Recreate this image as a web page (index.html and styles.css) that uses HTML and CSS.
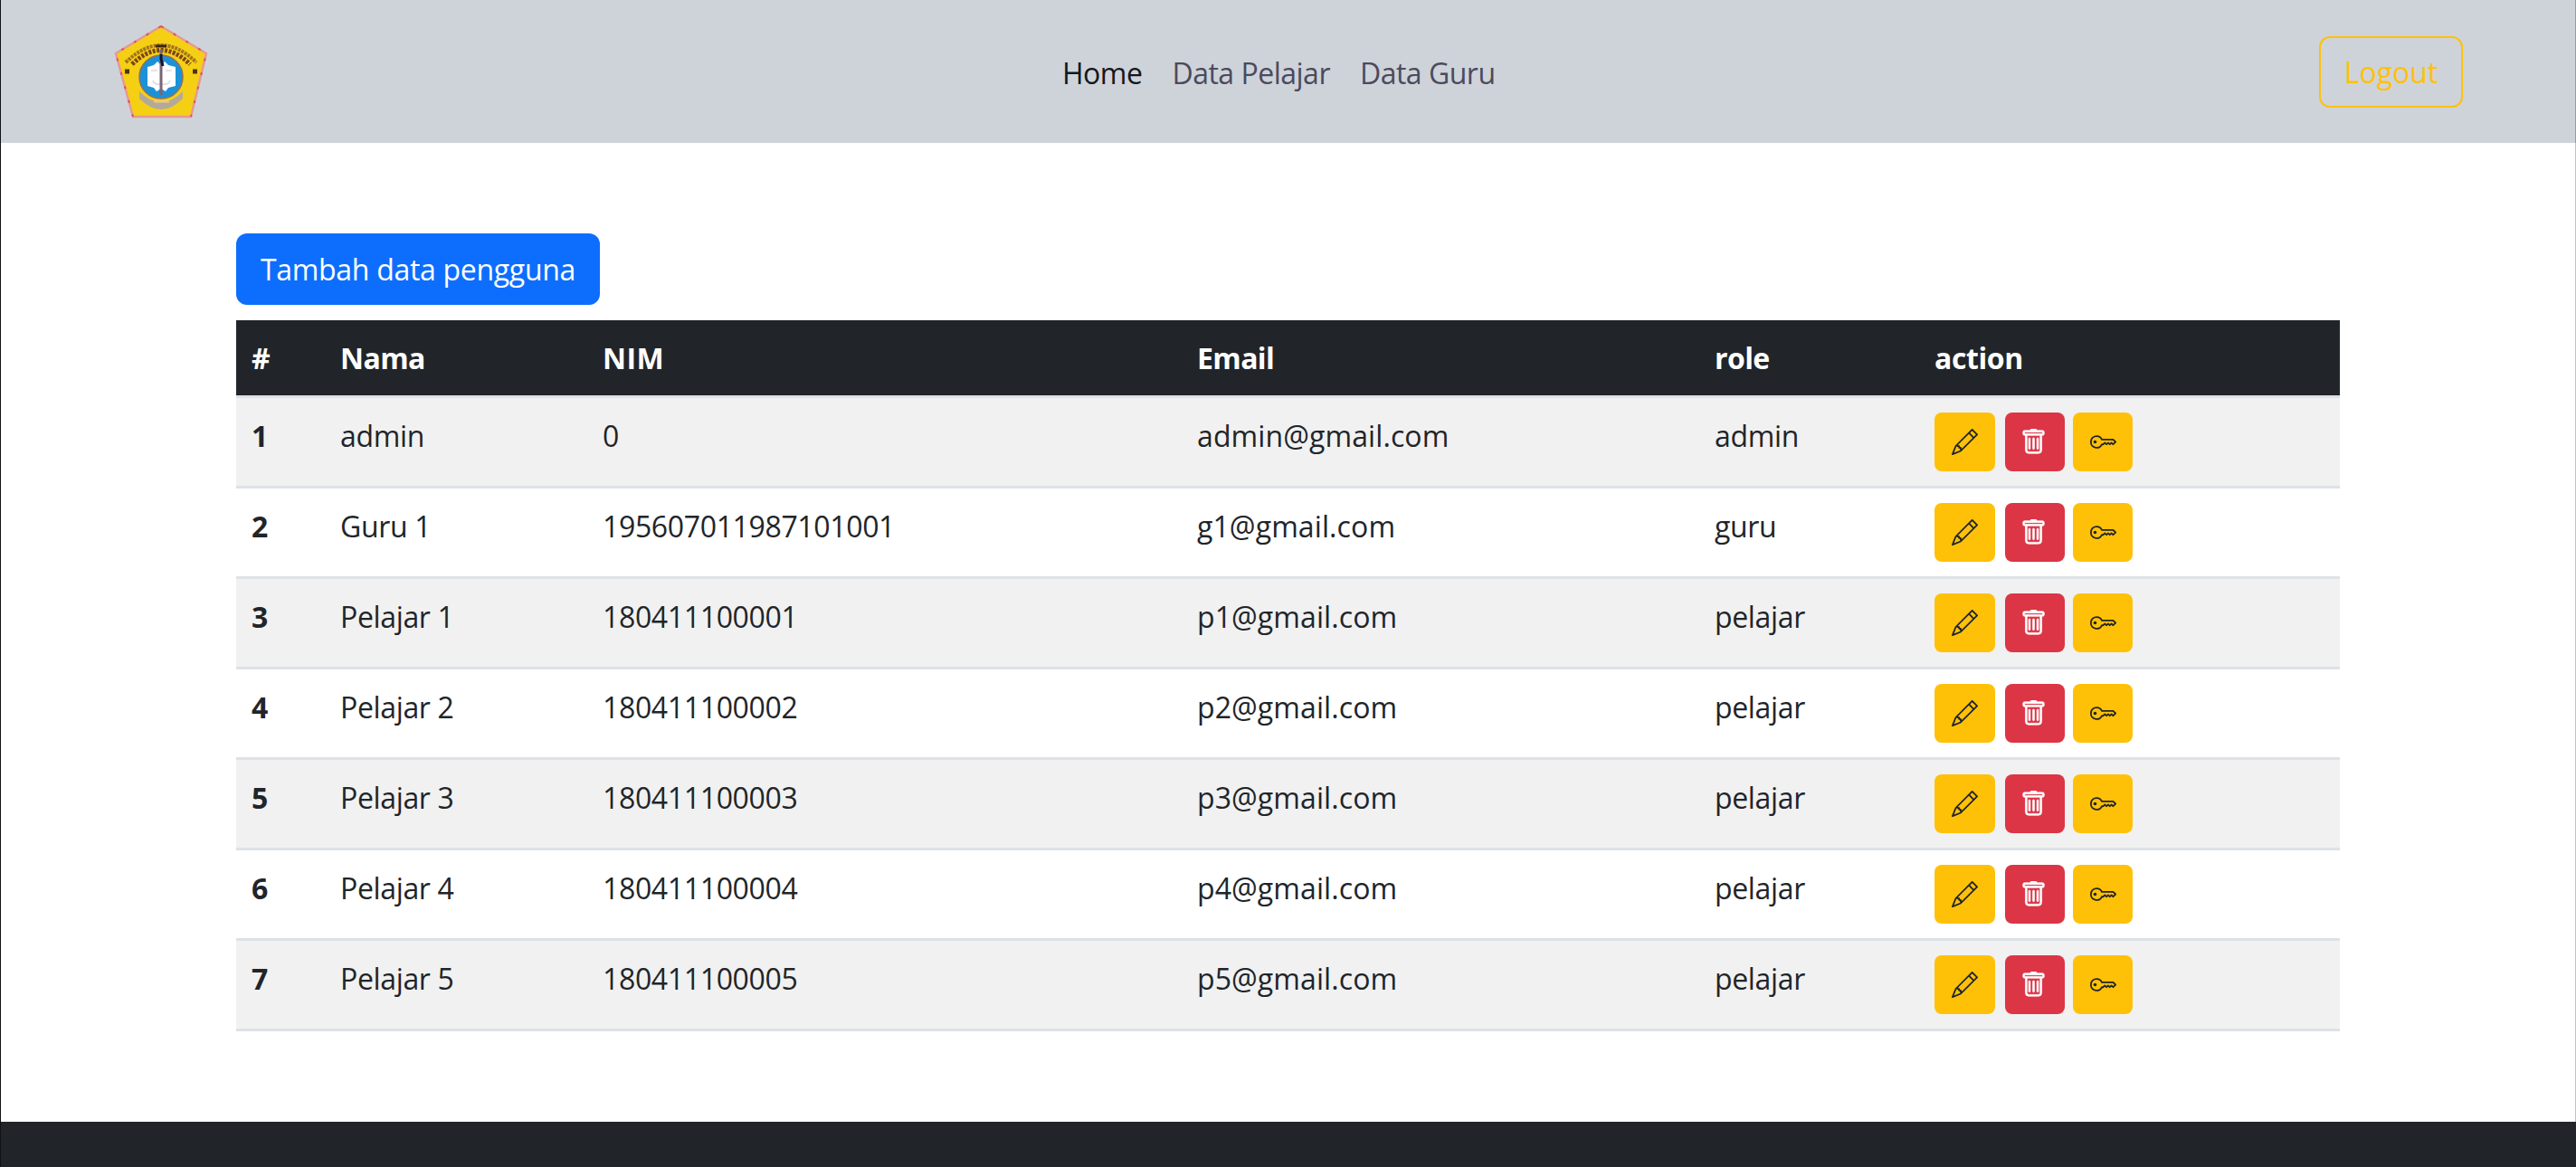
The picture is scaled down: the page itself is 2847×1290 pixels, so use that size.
FILE: index.html
```html
<!DOCTYPE html>
<html lang="id">
<head>
<meta charset="utf-8">
<title>Data Pengguna</title>
<link rel="stylesheet" href="styles.css">
</head>
<body>
<svg class="sprite" aria-hidden="true">
  <symbol id="pencil" viewBox="0 0 16 16"><path d="M12.146.146a.5.5 0 0 1 .708 0l3 3a.5.5 0 0 1 0 .708l-10 10a.5.5 0 0 1-.168.11l-5 2a.5.5 0 0 1-.65-.65l2-5a.5.5 0 0 1 .11-.168l10-10zM11.207 2.5 13.5 4.793 14.793 3.5 12.5 1.207 11.207 2.5zm1.586 3L10.500 3.207 4 9.707V10h.5a.5.5 0 0 1 .5.5v.5h.5a.5.5 0 0 1 .5.5v.5h.293l6.500-6.500zm-9.761 5.175-.106.106-1.528 3.821 3.821-1.528.106-.106A.5.5 0 0 1 5 12.500V12h-.5a.5.5 0 0 1-.5-.5V11h-.5a.5.5 0 0 1-.468-.325z"/></symbol>
  <symbol id="trash" viewBox="0 0 16 16"><path d="M5.500 5.500A.5.5 0 0 1 6 6v6a.5.5 0 0 1-1 0V6a.5.5 0 0 1 .5-.5zm2.500 0a.5.5 0 0 1 .5.5v6a.5.5 0 0 1-1 0V6a.5.5 0 0 1 .5-.5zm3 .5a.5.5 0 0 0-1 0v6a.5.5 0 0 0 1 0V6z"/><path fill-rule="evenodd" d="M14.500 3a1 1 0 0 1-1 1H13v9a2 2 0 0 1-2 2H5a2 2 0 0 1-2-2V4h-.5a1 1 0 0 1-1-1V2a1 1 0 0 1 1-1H6a1 1 0 0 1 1-1h2a1 1 0 0 1 1 1h3.500a1 1 0 0 1 1 1v1zM4.118 4 4 4.059V13a1 1 0 0 0 1 1h6a1 1 0 0 0 1-1V4.059L11.882 4H4.118zM2.500 3V2h11v1h-11z"/></symbol>
  <symbol id="key" viewBox="0 0 16 16"><path d="M0 8a4 4 0 0 1 7.465-2H14a.5.5 0 0 1 .354.146l1.500 1.500a.5.5 0 0 1 0 .708l-1.500 1.500a.5.5 0 0 1-.708 0L13 9.207l-.646.647a.5.5 0 0 1-.708 0L11 9.207l-.646.647a.5.5 0 0 1-.708 0L9 9.207l-.646.647A.5.5 0 0 1 8 10h-.535A4 4 0 0 1 0 8zm4-3a3 3 0 1 0 2.712 4.285A.5.5 0 0 1 7.163 9h.63l.853-.854a.5.5 0 0 1 .708 0l.646.647.646-.647a.5.5 0 0 1 .708 0l.646.647.646-.647a.5.5 0 0 1 .708 0l.646.647.793-.793-1-1h-6.630a.5.5 0 0 1-.451-.285A3 3 0 0 0 4 5z"/><path d="M4 8a1 1 0 1 1-2 0 1 1 0 0 1 2 0z"/></symbol>
</svg>
<header class="navbar">
  <svg class="logo" viewBox="0 0 104 104">
    <path d="M52 2 102 32 85 102H21L2 32Z" fill="#f5cf14" stroke="#e59a92" stroke-width="2.500"/>
    <path d="M52 2 102 32 85 102" fill="none" stroke="#d9324b" stroke-width="2" stroke-dasharray="3 13" opacity=".7"/>
    <path d="M52 2 2 32 21 102" fill="none" stroke="#d9324b" stroke-width="2" stroke-dasharray="3 13" opacity=".7"/>
    <path d="M13 42Q52 4 91 42" fill="none" stroke="#a3741c" stroke-width="4" stroke-dasharray="3 1"/>
    <path d="M20 44Q52 13 84 44" fill="none" stroke="#7a4616" stroke-width="5" stroke-dasharray="3 1.500"/>
    <path d="M46 24h12" stroke="#3b2410" stroke-width="3"/>
    <path d="M28 74Q52 98 76 74L76 82Q52 106 28 82Z" fill="#b3a99a"/>
    <circle cx="52" cy="58" r="24" fill="#1c91d8" stroke="#8c715c" stroke-width="1.500"/>
    <path d="M37 47 44 45 48 41 52 45 56 41 60 45 68 47V68L60 70 57 74 52 71 47 74 44 70 37 68Z" fill="#fff"/>
    <path d="M41 51h7M57 51h7M43 62q1 5 8 4M53 66q8 1 9-4" stroke="#dadbe2" stroke-width="1.500" fill="none"/>
    <path d="M52 28v50" stroke="#796575" stroke-width="3"/>
    <path d="M52 33V38L54 46" stroke="#15172d" stroke-width="3" fill="none"/>
    <path d="M44 85h17" stroke="#f0c878" stroke-width="3"/>
    <path d="M12 52h5M87 52h5" stroke="#51320e" stroke-width="5"/>
  </svg>
  <nav class="menu">
    <a class="link home">Home</a>
    <a class="link">Data Pelajar</a>
    <a class="link">Data Guru</a>
  </nav>
  <a class="btn logout">Logout</a>
</header>
<main class="content">
  <a class="btn add">Tambah data pengguna</a>
  <table class="users">
    <colgroup><col class="c1"><col class="c2"><col class="c3"><col class="c4"><col class="c5"><col class="c6"></colgroup>
    <thead><tr><th>#</th><th>Nama</th><th class="nim">NIM</th><th>Email</th><th>role</th><th>action</th></tr></thead>
    <tbody>
      <tr><th>1</th><td>admin</td><td>0</td><td class="email">admin@gmail.com</td><td>admin</td><td><div class="actions"><a class="act edit"><svg><use href="#pencil"/></svg></a><a class="act del"><svg><use href="#trash"/></svg></a><a class="act"><svg><use href="#key"/></svg></a></div></td></tr>
      <tr><th>2</th><td>Guru 1</td><td>195607011987101001</td><td class="email">g1@gmail.com</td><td>guru</td><td><div class="actions"><a class="act edit"><svg><use href="#pencil"/></svg></a><a class="act del"><svg><use href="#trash"/></svg></a><a class="act"><svg><use href="#key"/></svg></a></div></td></tr>
      <tr><th>3</th><td>Pelajar 1</td><td>180411100001</td><td class="email">p1@gmail.com</td><td>pelajar</td><td><div class="actions"><a class="act edit"><svg><use href="#pencil"/></svg></a><a class="act del"><svg><use href="#trash"/></svg></a><a class="act"><svg><use href="#key"/></svg></a></div></td></tr>
      <tr><th>4</th><td>Pelajar 2</td><td>180411100002</td><td class="email">p2@gmail.com</td><td>pelajar</td><td><div class="actions"><a class="act edit"><svg><use href="#pencil"/></svg></a><a class="act del"><svg><use href="#trash"/></svg></a><a class="act"><svg><use href="#key"/></svg></a></div></td></tr>
      <tr><th>5</th><td>Pelajar 3</td><td>180411100003</td><td class="email">p3@gmail.com</td><td>pelajar</td><td><div class="actions"><a class="act edit"><svg><use href="#pencil"/></svg></a><a class="act del"><svg><use href="#trash"/></svg></a><a class="act"><svg><use href="#key"/></svg></a></div></td></tr>
      <tr><th>6</th><td>Pelajar 4</td><td>180411100004</td><td class="email">p4@gmail.com</td><td>pelajar</td><td><div class="actions"><a class="act edit"><svg><use href="#pencil"/></svg></a><a class="act del"><svg><use href="#trash"/></svg></a><a class="act"><svg><use href="#key"/></svg></a></div></td></tr>
      <tr><th>7</th><td>Pelajar 5</td><td>180411100005</td><td class="email">p5@gmail.com</td><td>pelajar</td><td><div class="actions"><a class="act edit"><svg><use href="#pencil"/></svg></a><a class="act del"><svg><use href="#trash"/></svg></a><a class="act"><svg><use href="#key"/></svg></a></div></td></tr>
    </tbody>
  </table>
</main>
<footer class="footer"></footer>
</body>
</html>
```
FILE: styles.css
```css
* { box-sizing: border-box; }
body {
  margin: 0;
  height: 1290px;
  display: flex;
  flex-direction: column;
  overflow: hidden;
  border-left: 1px solid #111315;
  background: #fff;
  color: #212529;
  font-family: "Open Sans", "Noto Sans", sans-serif;
  font-size: 32px;
  line-height: 50px;
  letter-spacing: -0.35px;
}
.sprite { position: absolute; width: 0; height: 0; }
.navbar {
  height: 158px;
  flex: none;
  display: grid;
  grid-template-columns: 1048px 1fr auto;
  align-items: center;
  padding: 0 124px 0 125px;
  background: #ced3da;
  border-right: 1px solid #9c93c8;
}
.logo { width: 104px; height: 104px; display: block; }
.menu { display: flex; gap: 33px; padding-top: 3px; letter-spacing: -0.5px; }
.link { color: #4c4a5c; white-space: nowrap; }
.home { color: #16171a; }
.btn {
  display: flex;
  align-items: center;
  justify-content: center;
  height: 79px;
  padding-top: 1px;
  border-radius: 12px;
  white-space: nowrap;
}
.logout {
  width: 159px;
  border: 2px solid #ffc107;
  color: #ffc107;
  letter-spacing: 0;
}
.content {
  flex: none;
  height: 1082px;
  padding: 100px 260px;
  border-right: 1px solid #cdbcc4;
}
.add { width: 402px; background: #0d6efd; color: #fff; letter-spacing: -0.3px; }
.users {
  width: 2325px;
  margin-top: 17px;
  table-layout: fixed;
  border-collapse: separate;
  border-spacing: 0;
}
.c1 { width: 98px; }
.c2 { width: 290px; }
.c3 { width: 657px; }
.c4 { width: 572px; }
.c5 { width: 243px; }
.c6 { width: 465px; }
.users th, .users td {
  padding: 16px 17px;
  text-align: left;
  vertical-align: top;
  border-bottom: 3px solid #dee2e6;
}
.users th:not(:last-child), .users td:not(:last-child) { padding: 17px 17px 15px; }
.users th { font-weight: 700; letter-spacing: -0.6px; }
.users .nim { letter-spacing: 0.4px; }
.users .email { letter-spacing: 0.1px; }
.users thead th { height: 86px; background: #212529; color: #fff; }
.users thead th:last-child { padding: 17px 17px 15px; letter-spacing: -0.4px; }
.users tbody tr { height: 100px; }
.users tbody tr:nth-child(odd) { background: #f1f1f1; }
.actions { display: flex; height: 65px; }
.act {
  width: 66px;
  height: 65px;
  margin-right: 9px;
  display: flex;
  align-items: center;
  justify-content: center;
  border-radius: 8px;
  background: #ffc107;
  color: #212529;
}
.act svg { width: 29px; height: 29px; fill: currentColor; }
.edit { width: 67px; margin-right: 11px; }
.del { background: #dc3545; color: #fff; padding-right: 3px; }
.del svg { stroke: currentColor; stroke-width: 0.4px; }
.footer { height: 50px; flex: none; background: #212529; }
```
